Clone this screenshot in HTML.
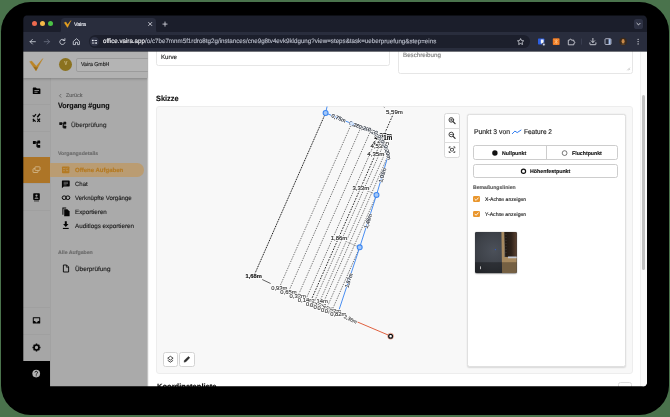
<!DOCTYPE html>
<html>
<head>
<meta charset="utf-8">
<title>Vaira</title>
<style>
html,body{margin:0;padding:0;width:670px;height:417px;overflow:hidden;background:#4a734c;font-family:"Liberation Sans",sans-serif;}
*{box-sizing:border-box}
.a{position:absolute}
#shadow{position:absolute;left:1px;top:2px;width:668px;height:413px;border-radius:29.5px;background:#000}
#win{position:absolute;left:0;top:0;width:670px;height:417px;clip-path:inset(15px 23px 30px 23px round 5px);background:#000}
#page{position:absolute;left:0;top:0;width:670px;height:417px;clip-path:inset(51px 0 0 0)}
#gs{position:absolute;left:0;top:0;width:670px;height:417px;will-change:transform}
#tabstrip{left:23px;top:15px;width:624px;height:17.5px;background:#1b1e2b}
#toolbar{left:23px;top:32px;width:624px;height:19px;background:#292d3d}
#tbline{left:23px;top:51px;width:624px;height:1px;background:rgba(24,26,37,.6)}
#tab{left:61px;top:17.6px;width:95px;height:15px;background:#292d3d;border-radius:3.5px 3.5px 0 0}
.tl{width:5.3px;height:5.3px;border-radius:50%;top:21.15px}
#omni{left:88.5px;top:35.3px;width:441.7px;height:12.8px;border-radius:6.4px;background:#1c1f2c}
.t{position:absolute;white-space:nowrap;line-height:1;transform-origin:0 0}
svg{position:absolute;left:0;top:0;overflow:visible}
#rail{left:23px;top:51px;width:26.5px;height:336px;background:#a6a6a6}
#side{left:49.5px;top:51px;width:98.2px;height:336px;background:#aaaaaa;border-left:0.6px solid #a2a2a2}
#sidehead{left:23px;top:51px;width:124.7px;height:26.5px;background:#b1b1b1;box-shadow:0 .5px 2.500px rgba(0,0,0,.22)}
.box{position:absolute;background:#fff;border:0.7px solid #e6e6e6;border-radius:2.5px}
#sketch{left:156.3px;top:106.3px;width:476.5px;height:267.6px;background:#f8f8f8;border:0.6px solid #ededed;border-radius:3px}
#card{left:466.5px;top:113.5px;width:159px;height:253px;background:#fff;border:0.6px solid #e0e0e0;border-radius:2.5px;box-shadow:0 0.8px 1.5px rgba(0,0,0,.13)}
.btn{position:absolute;background:#fff;border:0.7px solid #cdcdcd;border-radius:2.5px}
</style>
</head>
<body>
<div id="shadow"></div>
<div id="win"><div id="gs">
<div id="page"><div class="a" style="left:22px;top:50px;width:626px;height:340px;background:#fff"></div>
<div class="a" style="left:0;top:0;width:670px;height:417px;clip-path:inset(0 522.300px 0 0)">
<div id="rail" class="a"></div><div id="side" class="a"></div><div id="sidehead" class="a"></div>
<div class="a" style="left:23px;top:104.3px;width:26.5px;height:.6px;background:#a0a0a0"></div>
<div class="a" style="left:23px;top:131px;width:26.5px;height:.6px;background:#a0a0a0"></div>
<div class="a" style="left:23px;top:157.1px;width:26.5px;height:.6px;background:#a0a0a0"></div>
<div class="a" style="left:23px;top:183.2px;width:26.5px;height:.6px;background:#a0a0a0"></div>
<div class="a" style="left:23px;top:209.5px;width:26.5px;height:.6px;background:#a0a0a0"></div>
<div class="a" style="left:23px;top:307px;width:26.5px;height:.6px;background:#a0a0a0"></div>
<div class="a" style="left:23px;top:334px;width:26.5px;height:.6px;background:#a0a0a0"></div>
<div class="a" style="left:23px;top:361px;width:26.5px;height:.6px;background:#a0a0a0"></div>
<div class="a" style="left:23px;top:157.1px;width:26.5px;height:26px;background:#ad7527"></div>
<div class="a" style="left:23px;top:361px;width:26.5px;height:26px;background:#000"></div>
<div class="a" style="left:76.3px;top:57.6px;width:80px;height:14px;background:#b4b4b4;border:.6px solid #9c9c9c;border-radius:2px"></div>
<div class="a" style="left:59.1px;top:57.9px;width:13.2px;height:13.2px;border-radius:50%;background:#8b721f"></div>
<span class="t" style="left:64.30px;top:62.31px;font-size:4.6px;color:#c2b078;font-weight:bold;-webkit-text-stroke:0.14px #c2b078;">V</span>
<span class="t" style="left:80.90px;top:61.67px;font-size:5.7px;color:#232323;transform:scaleX(0.9180) rotate(0.03deg);-webkit-text-stroke:0.14px #232323;">Vaira GmbH</span>
<div class="a" style="left:50px;top:163.2px;width:94.4px;height:13.4px;border-radius:0 6.7px 6.7px 0;background:#ba9c72"></div>
<span class="t" style="left:66.30px;top:93.44px;font-size:5.5px;color:#5e5e5e;transform:scaleX(0.9816) rotate(0.03deg);-webkit-text-stroke:0.14px #5e5e5e;">Zurück</span>
<span class="t" style="left:58.00px;top:101.55px;font-size:7.5px;color:#101010;font-weight:bold;transform:scaleX(0.9478) rotate(0.03deg);-webkit-text-stroke:0.14px #101010;">Vorgang #gung</span>
<span class="t" style="left:70.80px;top:121.85px;font-size:6.2px;color:#2b2b2b;transform:scaleX(1.0300) rotate(0.03deg);-webkit-text-stroke:0.14px #2b2b2b;">Überprüfung</span>
<span class="t" style="left:58.00px;top:151.07px;font-size:5.0px;color:#6c6c6c;font-weight:bold;transform:scaleX(1.0434) rotate(0.03deg);-webkit-text-stroke:0.14px #6c6c6c;">Vorgangsdetails</span>
<span class="t" style="left:75.10px;top:166.82px;font-size:6.0px;color:#b47a22;font-weight:bold;transform:scaleX(1.0018) rotate(0.03deg);-webkit-text-stroke:0.14px #b47a22;">Offene Aufgaben</span>
<span class="t" style="left:75.10px;top:180.65px;font-size:6.2px;color:#1f1f1f;transform:scaleX(0.9697) rotate(0.03deg);-webkit-text-stroke:0.14px #1f1f1f;">Chat</span>
<span class="t" style="left:75.10px;top:194.55px;font-size:6.2px;color:#1f1f1f;transform:scaleX(0.9807) rotate(0.03deg);-webkit-text-stroke:0.14px #1f1f1f;">Verknüpfte Vorgänge</span>
<span class="t" style="left:75.10px;top:208.55px;font-size:6.2px;color:#1f1f1f;transform:scaleX(1.0061) rotate(0.03deg);-webkit-text-stroke:0.14px #1f1f1f;">Exportieren</span>
<span class="t" style="left:75.10px;top:222.95px;font-size:6.2px;color:#1f1f1f;transform:scaleX(1.0146) rotate(0.03deg);-webkit-text-stroke:0.14px #1f1f1f;">Auditlogs exportieren</span>
<span class="t" style="left:58.00px;top:249.97px;font-size:5.0px;color:#6c6c6c;font-weight:bold;transform:scaleX(1.0410) rotate(0.03deg);-webkit-text-stroke:0.14px #6c6c6c;">Alle Aufgaben</span>
<span class="t" style="left:75.10px;top:265.95px;font-size:6.2px;color:#1f1f1f;transform:scaleX(1.0300) rotate(0.03deg);-webkit-text-stroke:0.14px #1f1f1f;">Überprüfung</span>
<svg width="670" height="417" viewBox="0 0 670 417">
<path d="M29.7 61.7 L31.7 61.1 L36.3 66.3 L42.8 58.6 L36.0 70.8 Z" fill="#bb8426" stroke="#bb8426" stroke-width=".5" stroke-linejoin="round"/>
<path d="M33.4 66.4 L36.0 70.8 L38.0 67.3 L36.3 67.6 Z" fill="#96691a"/>
<path d="M61.2 94.0l-1.7 1.8 1.7 1.8" fill="none" stroke="#5a5a5a" stroke-width=".75"/>
<path d="M33.4 87.6h2.4l1 1h3a.6.6 0 0 1 .6.6v4.2a.6.6 0 0 1-.6.6h-6.4a.6.6 0 0 1-.6-.6v-5.200a.6.6 0 0 1 .6-.6z" fill="#050505"/><rect x="34.4" y="90.2" width="4.6" height=".8" fill="#a6a6a6"/><rect x="34.400" y="91.800" width="3.200" height=".8" fill="#a6a6a6"/>
<g fill="none" stroke="#050505" stroke-width="1.150" stroke-linejoin="round"><path d="M32.700 115.300l1.300 1.300 2-2.500"/><path d="M40 113.700l-2.700 3.500" stroke-width="1.400"/><path d="M37.300 118.600l2.700 3.200M40 118.600l-2.700 3.200"/></g><path d="M33.300 118.400l2.800 2.800-.9.900-1-1-.9.900-.9-.9.900-.9-.9-.9z" fill="#050505"/>
<g transform="translate(36.5 144) scale(1.0)" fill="#050505"><rect x="-3.6" y="-3" width="2.9" height="2.9" rx=".3"/><rect x="0.800" y="-3.4" width="2.900" height="2.900" rx=".3"/><rect x="0.800" y=".9" width="2.900" height="2.900" rx=".3"/><path d="M-1 -1.9h1.200v4.600h1v-.9h-.2v-2.800h.2v-.9z" stroke="#050505" stroke-width=".5"/></g>
<g transform="translate(62.7 125) scale(0.95)" fill="#111"><rect x="-3.6" y="-3" width="2.9" height="2.9" rx=".3"/><rect x="0.800" y="-3.4" width="2.900" height="2.900" rx=".3"/><rect x="0.800" y=".9" width="2.900" height="2.900" rx=".3"/><path d="M-1 -1.9h1.200v4.600h1v-.9h-.2v-2.800h.2v-.9z" stroke="#111" stroke-width=".5"/></g>
<g fill="none" stroke="#d9c39b" stroke-width=".75"><rect x="35" y="166.800" width="5" height="3.600" rx=".6"/><path d="M35 168.700h-1.400a.6.6 0 0 0-.6.600v2.600a.6.6 0 0 0 .6.600h3.800a.6.6 0 0 0 .6-.6v-1.300"/></g>
<rect x="33.200" y="193.200" width="6.600" height="6.800" rx=".8" fill="#050505"/><circle cx="36.500" cy="195.600" r="1.100" fill="#a6a6a6"/><path d="M34.500 198.800a2 1.400 0 0 1 4 0z" fill="#a6a6a6"/><rect x="34" y="200.600" width="5" height=".7" fill="#050505"/>
<path d="M33.300 317.200h6.400a.5.500 0 0 1 .5.500v5.400a.5.500 0 0 1-.5.500h-6.400a.5.500 0 0 1-.5-.5v-5.400a.5.500 0 0 1 .5-.5z" fill="#050505"/><path d="M33.800 318.200h5.400v2.900h-1.400a1.300 1.300 0 0 1-2.600 0h-1.400z" fill="#a6a6a6"/>
<g transform="translate(36.5 347.500)"><circle r="2.500" fill="none" stroke="#050505" stroke-width="1.700"/><g stroke="#050505" stroke-width="1.500"><path d="M0 -2.600V-4" transform="rotate(0)"/><path d="M0 -2.600V-4" transform="rotate(45)"/><path d="M0 -2.600V-4" transform="rotate(90)"/><path d="M0 -2.600V-4" transform="rotate(135)"/><path d="M0 -2.600V-4" transform="rotate(180)"/><path d="M0 -2.600V-4" transform="rotate(225)"/><path d="M0 -2.600V-4" transform="rotate(270)"/><path d="M0 -2.600V-4" transform="rotate(315)"/></g></g>
<circle cx="36.200" cy="373.600" r="3.850" fill="#b3b3b3"/><path d="M34.950 372.550a1.300 1.300 0 1 1 1.950 1.100c-.5.300-.7.500-.7 1.050" fill="none" stroke="#0c0c0c" stroke-width=".85"/><circle cx="36.200" cy="375.850" r=".52" fill="#0c0c0c"/>
<rect x="62" y="166.400" width="7.400" height="6.800" rx=".8" fill="#b47a22"/><g stroke="#ba9c72" stroke-width=".7" fill="none"><path d="M63.200 168.500h1.600M63.200 170.700h1.600M65.600 168.500l.7.700 1.400-1.500"/><path d="M66 170.700h2.200"/></g>
<path d="M62.500 180.600h6.600a.6.600 0 0 1 .6.600v4.600a.6.600 0 0 1-.6.600h-5.400l-1.800 1.800v-7a.6.600 0 0 1 .6-.6z" fill="#050505"/><path d="M63.600 182.300h4.400M63.600 183.600h4.400M63.600 184.900h3" stroke="#ababab" stroke-width=".5"/>
<g fill="none" stroke="#050505" stroke-width="1"><rect x="62.200" y="195.900" width="4" height="3.600" rx="1.800"/><rect x="65.800" y="195.900" width="4" height="3.600" rx="1.800"/></g>
<path d="M62.400 207.500h3.800v1h-2.800v6.200h-1z" fill="#050505"/><path d="M64.200 209.300h3.200l2.200 2.200v4.300a.5.500 0 0 1-.5.500h-4.900z" fill="#050505"/>
<path d="M64.800 221.300h2v2.700h1.700l-2.700 2.900-2.700-2.900h1.700z" fill="#050505"/><rect x="62.900" y="227.900" width="5.800" height="1.100" fill="#050505"/>
<path d="M63.400 265h3.200l2 2v5h-5.200z" fill="none" stroke="#050505" stroke-width=".9" stroke-linejoin="round"/><path d="M66.400 265v2.200h2.200" fill="none" stroke="#050505" stroke-width=".7"/>
</svg>
</div><!-- /sidebar clip -->
<div class="a" id="sideshadow" style="left:147.700px;top:51.500px;width:1.500px;height:335px;background:linear-gradient(90deg,rgba(0,0,0,.10),rgba(0,0,0,0))"></div>
<div class="box" style="left:156.3px;top:40px;width:233.600px;height:26.200px"></div>
<div class="box" style="left:398px;top:40px;width:235px;height:33.700px"></div>
<span class="t" style="left:161.20px;top:53.84px;font-size:6.1px;color:#222;transform:scaleX(1.0040) rotate(0.03deg);-webkit-text-stroke:0.14px #222;">Kurve</span>
<span class="t" style="left:403.40px;top:51.75px;font-size:6.2px;color:#7e7e7e;transform:scaleX(1.0022) rotate(0.03deg);-webkit-text-stroke:0.14px #7e7e7e;">Beschreibung</span>
<span class="t" style="left:156.40px;top:94.68px;font-size:7.7px;color:#111;font-weight:bold;transform:scaleX(0.9643) rotate(0.03deg);-webkit-text-stroke:0.14px #111;">Skizze</span>
<span class="t" style="left:156.60px;top:382.68px;font-size:7.7px;color:#111;font-weight:bold;transform:scaleX(0.9810) rotate(0.03deg);-webkit-text-stroke:0.14px #111;">Koordinatenliste</span>
<svg width="670" height="417" viewBox="0 0 670 417"><path d="M627.300 70.300l2.600-2.600M628.800 70.300l1.100-1.100" stroke="#8f8f8f" stroke-width=".5"/></svg>
<div class="a" style="left:640.300px;top:51.500px;width:6.700px;height:335px;background:#fafafa;border-left:.5px solid #f0f0f0"></div>
<div class="a" style="left:641.900px;top:94.500px;width:3.600px;height:175.500px;border-radius:1.800px;background:#c1c1c1"></div>
<div class="btn" style="left:617.500px;top:382.300px;width:14.500px;height:12px;border-color:#dcdcdc"></div>
<div id="sketch" class="a"></div>
<svg width="670" height="417" viewBox="0 0 670 417" font-family="Liberation Sans, sans-serif">
<defs><clipPath id="skc"><rect x="156.600" y="106.600" width="476" height="266.400" rx="3"/></clipPath></defs>
<g clip-path="url(#skc)">
<path d="M325.6 113.0L253.1 277.7" stroke="#0c0c0c" stroke-width="1.0" stroke-dasharray="1.1 0.8" fill="none"/>
<path d="M351.6 123.5L278.9 288.6" stroke="#121212" stroke-width="0.58" stroke-dasharray="1.35 1.15" fill="none"/>
<path d="M361.0 127.2L288.2 292.6" stroke="#121212" stroke-width="0.58" stroke-dasharray="1.35 1.15" fill="none"/>
<path d="M370.8 130.4L297.7 296.6" stroke="#121212" stroke-width="0.58" stroke-dasharray="1.35 1.15" fill="none"/>
<path d="M378.0 135.4L305.6 300.0" stroke="#121212" stroke-width="0.58" stroke-dasharray="1.35 1.15" fill="none"/>
<path d="M383.8 143.8L313.6 303.4" stroke="#121212" stroke-width="0.58" stroke-dasharray="1.35 1.15" fill="none"/>
<path d="M386.6 149.5L318.1 305.3" stroke="#121212" stroke-width="0.58" stroke-dasharray="1.35 1.15" fill="none"/>
<path d="M388.2 155.4L321.6 306.8" stroke="#121212" stroke-width="0.58" stroke-dasharray="1.35 1.15" fill="none"/>
<path d="M376.5 194.9L326.4 308.8" stroke="#121212" stroke-width="0.58" stroke-dasharray="1.35 1.15" fill="none"/>
<path d="M359.7 247.3L331.7 311.0" stroke="#121212" stroke-width="0.58" stroke-dasharray="1.35 1.15" fill="none"/>
<path d="M393.6 113.2L310.3 302.0" stroke="#0c0c0c" stroke-width="0.9" stroke-dasharray="1.6 1.3" fill="none"/>
<path d="M383.700 106.900l.9.700" stroke="#222" stroke-width=".6"/>
<path d="M262.200 279.500L270.600 283.500" stroke="#222" stroke-width=".7"/>
<path d="M357.500 322L389.300 335.500" stroke="#de5836" stroke-width=".95"/>
<text x="386" y="113.9" font-size="6.0" textLength="16.8" lengthAdjust="spacingAndGlyphs" text-anchor="start" fill="#fff" stroke="#fff" stroke-width="1.400" stroke-linejoin="round">5,59m</text>
<text x="386" y="113.9" font-size="6.0" textLength="16.8" lengthAdjust="spacingAndGlyphs" text-anchor="start" fill="#262626" stroke="#262626" stroke-width=".15">5,59m</text>
<text x="374.4" y="138.1" font-size="6.4" font-weight="bold" textLength="17.8" lengthAdjust="spacingAndGlyphs" text-anchor="start" fill="#fff" stroke="#fff" stroke-width="1.400" stroke-linejoin="round">4,97m</text>
<text x="374.4" y="138.1" font-size="6.4" font-weight="bold" textLength="17.8" lengthAdjust="spacingAndGlyphs" text-anchor="start" fill="#0a0a0a" stroke="#0a0a0a" stroke-width=".15">4,97m</text>
<text x="374.6" y="139.6" font-size="6.4" font-weight="bold" textLength="17.8" lengthAdjust="spacingAndGlyphs" text-anchor="start" fill="#fff" stroke="#fff" stroke-width="1.400" stroke-linejoin="round">4,81m</text>
<text x="374.6" y="139.6" font-size="6.4" font-weight="bold" textLength="17.8" lengthAdjust="spacingAndGlyphs" text-anchor="start" fill="#0a0a0a" stroke="#0a0a0a" stroke-width=".15">4,81m</text>
<text x="372.4" y="144.6" font-size="6.0" textLength="16.6" lengthAdjust="spacingAndGlyphs" text-anchor="start" fill="#fff" stroke="#fff" stroke-width="1.400" stroke-linejoin="round">4,68m</text>
<text x="372.4" y="144.6" font-size="6.0" textLength="16.6" lengthAdjust="spacingAndGlyphs" text-anchor="start" fill="#262626" stroke="#262626" stroke-width=".15">4,68m</text>
<text x="370.6" y="148.4" font-size="6.0" textLength="16.6" lengthAdjust="spacingAndGlyphs" text-anchor="start" fill="#fff" stroke="#fff" stroke-width="1.400" stroke-linejoin="round">4,53m</text>
<text x="370.6" y="148.4" font-size="6.0" textLength="16.6" lengthAdjust="spacingAndGlyphs" text-anchor="start" fill="#262626" stroke="#262626" stroke-width=".15">4,53m</text>
<text x="367.3" y="155.6" font-size="6.0" textLength="17.0" lengthAdjust="spacingAndGlyphs" text-anchor="start" fill="#fff" stroke="#fff" stroke-width="1.400" stroke-linejoin="round">4,35m</text>
<text x="367.3" y="155.6" font-size="6.0" textLength="17.0" lengthAdjust="spacingAndGlyphs" text-anchor="start" fill="#262626" stroke="#262626" stroke-width=".15">4,35m</text>
<text x="352.5" y="190.2" font-size="6.0" textLength="16.7" lengthAdjust="spacingAndGlyphs" text-anchor="start" fill="#fff" stroke="#fff" stroke-width="1.400" stroke-linejoin="round">3,33m</text>
<text x="352.5" y="190.2" font-size="6.0" textLength="16.7" lengthAdjust="spacingAndGlyphs" text-anchor="start" fill="#262626" stroke="#262626" stroke-width=".15">3,33m</text>
<text x="330.7" y="239.8" font-size="6.0" textLength="16.5" lengthAdjust="spacingAndGlyphs" text-anchor="start" fill="#fff" stroke="#fff" stroke-width="1.400" stroke-linejoin="round">1,86m</text>
<text x="330.7" y="239.8" font-size="6.0" textLength="16.5" lengthAdjust="spacingAndGlyphs" text-anchor="start" fill="#262626" stroke="#262626" stroke-width=".15">1,86m</text>
<path d="M327.3 105.5 L325.6 113.0 L351.6 123.5 L361.0 127.2 L370.8 130.4 L378.0 135.4 L381.0 139.2 L383.8 143.8 L386.6 149.5 L388.2 155.4 L376.5 194.9 L359.7 247.3 L337.8 313.6" fill="none" stroke="#3f88f0" stroke-width=".95" stroke-linejoin="round"/>
<path d="M369.200 191.500L373.500 193.600M347.400 242.200L357 246.200" stroke="#444" stroke-width=".35"/>
<text x="338.6" y="118.2" transform="rotate(22.0 338.6 118.2)" dy="1.800" text-anchor="middle" font-size="5.3" fill="#fff" stroke="#fff" stroke-width="1.300" stroke-linejoin="round">0,75m</text>
<text x="338.6" y="118.2" transform="rotate(22.0 338.6 118.2)" dy="1.800" text-anchor="middle" font-size="5.3" fill="#2f3642" stroke="#2f3642" stroke-width=".18">0,75m</text>
<text x="356.3" y="125.3" transform="rotate(21.5 356.3 125.3)" dy="1.800" text-anchor="middle" font-size="5.3" fill="#fff" stroke="#fff" stroke-width="1.300" stroke-linejoin="round">0,28m</text>
<text x="356.3" y="125.3" transform="rotate(21.5 356.3 125.3)" dy="1.800" text-anchor="middle" font-size="5.3" fill="#2f3642" stroke="#2f3642" stroke-width=".18">0,28m</text>
<text x="365.9" y="128.8" transform="rotate(18.1 365.9 128.8)" dy="1.800" text-anchor="middle" font-size="5.3" fill="#fff" stroke="#fff" stroke-width="1.300" stroke-linejoin="round">0,28m</text>
<text x="365.9" y="128.8" transform="rotate(18.1 365.9 128.8)" dy="1.800" text-anchor="middle" font-size="5.3" fill="#2f3642" stroke="#2f3642" stroke-width=".18">0,28m</text>
<text x="374.4" y="132.9" transform="rotate(34.8 374.4 132.9)" dy="1.800" text-anchor="middle" font-size="5.3" fill="#fff" stroke="#fff" stroke-width="1.300" stroke-linejoin="round">0,23m</text>
<text x="374.4" y="132.9" transform="rotate(34.8 374.4 132.9)" dy="1.800" text-anchor="middle" font-size="5.3" fill="#2f3642" stroke="#2f3642" stroke-width=".18">0,23m</text>
<text x="379.5" y="137.3" transform="rotate(51.7 379.5 137.3)" dy="1.800" text-anchor="middle" font-size="5.3" fill="#fff" stroke="#fff" stroke-width="1.300" stroke-linejoin="round">0,16m</text>
<text x="379.5" y="137.3" transform="rotate(51.7 379.5 137.3)" dy="1.800" text-anchor="middle" font-size="5.3" fill="#2f3642" stroke="#2f3642" stroke-width=".18">0,16m</text>
<text x="382.4" y="141.5" transform="rotate(58.7 382.4 141.5)" dy="1.800" text-anchor="middle" font-size="5.3" fill="#fff" stroke="#fff" stroke-width="1.300" stroke-linejoin="round">0,16m</text>
<text x="382.4" y="141.5" transform="rotate(58.7 382.4 141.5)" dy="1.800" text-anchor="middle" font-size="5.3" fill="#2f3642" stroke="#2f3642" stroke-width=".18">0,16m</text>
<text x="385.2" y="146.7" transform="rotate(63.8 385.2 146.7)" dy="1.800" text-anchor="middle" font-size="5.3" fill="#fff" stroke="#fff" stroke-width="1.300" stroke-linejoin="round">0,18m</text>
<text x="385.2" y="146.7" transform="rotate(63.8 385.2 146.7)" dy="1.800" text-anchor="middle" font-size="5.3" fill="#2f3642" stroke="#2f3642" stroke-width=".18">0,18m</text>
<text x="387.4" y="152.4" transform="rotate(74.8 387.4 152.4)" dy="1.800" text-anchor="middle" font-size="5.3" fill="#fff" stroke="#fff" stroke-width="1.300" stroke-linejoin="round">0,20m</text>
<text x="387.4" y="152.4" transform="rotate(74.8 387.4 152.4)" dy="1.800" text-anchor="middle" font-size="5.3" fill="#2f3642" stroke="#2f3642" stroke-width=".18">0,20m</text>
<text x="382.4" y="175.2" transform="rotate(-73.5 382.4 175.2)" dy="1.800" text-anchor="middle" font-size="5.3" fill="#fff" stroke="#fff" stroke-width="1.300" stroke-linejoin="round">1,03m</text>
<text x="382.4" y="175.2" transform="rotate(-73.5 382.4 175.2)" dy="1.800" text-anchor="middle" font-size="5.3" fill="#2f3642" stroke="#2f3642" stroke-width=".18">1,03m</text>
<text x="368.1" y="221.1" transform="rotate(-72.2 368.1 221.1)" dy="1.800" text-anchor="middle" font-size="5.3" fill="#fff" stroke="#fff" stroke-width="1.300" stroke-linejoin="round">1,48m</text>
<text x="368.1" y="221.1" transform="rotate(-72.2 368.1 221.1)" dy="1.800" text-anchor="middle" font-size="5.3" fill="#2f3642" stroke="#2f3642" stroke-width=".18">1,48m</text>
<text x="348.8" y="280.5" transform="rotate(-71.7 348.8 280.5)" dy="1.800" text-anchor="middle" font-size="5.3" fill="#fff" stroke="#fff" stroke-width="1.300" stroke-linejoin="round">1,87m</text>
<text x="348.8" y="280.5" transform="rotate(-71.7 348.8 280.5)" dy="1.800" text-anchor="middle" font-size="5.3" fill="#2f3642" stroke="#2f3642" stroke-width=".18">1,87m</text>
<circle cx="325.6" cy="113.0" r="2.450" fill="#a3c7f8" stroke="#3f88f0" stroke-width="1.100"/>
<circle cx="376.5" cy="194.9" r="2.450" fill="#a3c7f8" stroke="#3f88f0" stroke-width="1.100"/>
<circle cx="359.7" cy="247.3" r="2.450" fill="#a3c7f8" stroke="#3f88f0" stroke-width="1.100"/>
<circle cx="351.6" cy="123.5" r="1.800" fill="#dbe8fb" stroke="#a9c8f5" stroke-width=".5"/>
<text x="245.6" y="278.1" font-size="6.0" font-weight="bold" textLength="16.2" lengthAdjust="spacingAndGlyphs" text-anchor="start" fill="#fff" stroke="#fff" stroke-width="1.400" stroke-linejoin="round">1,68m</text>
<text x="245.6" y="278.1" font-size="6.0" font-weight="bold" textLength="16.2" lengthAdjust="spacingAndGlyphs" text-anchor="start" fill="#111" stroke="#111" stroke-width=".15">1,68m</text>
<text x="271.2" y="289.5" font-size="6.0" textLength="16.3" lengthAdjust="spacingAndGlyphs" text-anchor="start" fill="#fff" stroke="#fff" stroke-width="1.400" stroke-linejoin="round">0,93m</text>
<text x="271.2" y="289.5" font-size="6.0" textLength="16.3" lengthAdjust="spacingAndGlyphs" text-anchor="start" fill="#3c3c3c" stroke="#3c3c3c" stroke-width=".15">0,93m</text>
<text x="280.3" y="294.0" font-size="6.0" textLength="16.3" lengthAdjust="spacingAndGlyphs" text-anchor="start" fill="#fff" stroke="#fff" stroke-width="1.400" stroke-linejoin="round">0,65m</text>
<text x="280.3" y="294.0" font-size="6.0" textLength="16.3" lengthAdjust="spacingAndGlyphs" text-anchor="start" fill="#3c3c3c" stroke="#3c3c3c" stroke-width=".15">0,65m</text>
<text x="289.5" y="298.0" font-size="6.0" textLength="16.3" lengthAdjust="spacingAndGlyphs" text-anchor="start" fill="#fff" stroke="#fff" stroke-width="1.400" stroke-linejoin="round">0,32m</text>
<text x="289.5" y="298.0" font-size="6.0" textLength="16.3" lengthAdjust="spacingAndGlyphs" text-anchor="start" fill="#3c3c3c" stroke="#3c3c3c" stroke-width=".15">0,32m</text>
<text x="297.8" y="301.6" font-size="6.0" textLength="16.3" lengthAdjust="spacingAndGlyphs" text-anchor="start" fill="#fff" stroke="#fff" stroke-width="1.400" stroke-linejoin="round">0,14m</text>
<text x="297.8" y="301.6" font-size="6.0" textLength="16.3" lengthAdjust="spacingAndGlyphs" text-anchor="start" fill="#3c3c3c" stroke="#3c3c3c" stroke-width=".15">0,14m</text>
<text x="305.9" y="305.7" font-size="6.0" textLength="16.3" lengthAdjust="spacingAndGlyphs" text-anchor="start" fill="#fff" stroke="#fff" stroke-width="1.400" stroke-linejoin="round">0,08m</text>
<text x="305.9" y="305.7" font-size="6.0" textLength="16.3" lengthAdjust="spacingAndGlyphs" text-anchor="start" fill="#3c3c3c" stroke="#3c3c3c" stroke-width=".15">0,08m</text>
<text x="311.5" y="303.2" font-size="6.0" textLength="16.3" lengthAdjust="spacingAndGlyphs" text-anchor="start" fill="#fff" stroke="#fff" stroke-width="1.400" stroke-linejoin="round">2,14m</text>
<text x="311.5" y="303.2" font-size="6.0" textLength="16.3" lengthAdjust="spacingAndGlyphs" text-anchor="start" fill="#3c3c3c" stroke="#3c3c3c" stroke-width=".15">2,14m</text>
<text x="310.0" y="307.0" font-size="6.0" textLength="16.3" lengthAdjust="spacingAndGlyphs" text-anchor="start" fill="#fff" stroke="#fff" stroke-width="1.400" stroke-linejoin="round">0,10m</text>
<text x="310.0" y="307.0" font-size="6.0" textLength="16.3" lengthAdjust="spacingAndGlyphs" text-anchor="start" fill="#3c3c3c" stroke="#3c3c3c" stroke-width=".15">0,10m</text>
<text x="313.5" y="308.6" font-size="6.0" textLength="16.3" lengthAdjust="spacingAndGlyphs" text-anchor="start" fill="#fff" stroke="#fff" stroke-width="1.400" stroke-linejoin="round">0,11m</text>
<text x="313.5" y="308.6" font-size="6.0" textLength="16.3" lengthAdjust="spacingAndGlyphs" text-anchor="start" fill="#3c3c3c" stroke="#3c3c3c" stroke-width=".15">0,11m</text>
<text x="317.5" y="310.4" font-size="6.0" textLength="16.3" lengthAdjust="spacingAndGlyphs" text-anchor="start" fill="#fff" stroke="#fff" stroke-width="1.400" stroke-linejoin="round">0,14m</text>
<text x="317.5" y="310.4" font-size="6.0" textLength="16.3" lengthAdjust="spacingAndGlyphs" text-anchor="start" fill="#3c3c3c" stroke="#3c3c3c" stroke-width=".15">0,14m</text>
<text x="321.0" y="311.6" font-size="6.0" textLength="16.3" lengthAdjust="spacingAndGlyphs" text-anchor="start" fill="#fff" stroke="#fff" stroke-width="1.400" stroke-linejoin="round">0,18m</text>
<text x="321.0" y="311.6" font-size="6.0" textLength="16.3" lengthAdjust="spacingAndGlyphs" text-anchor="start" fill="#3c3c3c" stroke="#3c3c3c" stroke-width=".15">0,18m</text>
<text x="324.8" y="313.2" font-size="6.0" textLength="16.3" lengthAdjust="spacingAndGlyphs" text-anchor="start" fill="#fff" stroke="#fff" stroke-width="1.400" stroke-linejoin="round">0,22m</text>
<text x="324.8" y="313.2" font-size="6.0" textLength="16.3" lengthAdjust="spacingAndGlyphs" text-anchor="start" fill="#3c3c3c" stroke="#3c3c3c" stroke-width=".15">0,22m</text>
<text x="330.2" y="315.6" font-size="6.0" textLength="16.3" lengthAdjust="spacingAndGlyphs" text-anchor="start" fill="#fff" stroke="#fff" stroke-width="1.400" stroke-linejoin="round">0,82m</text>
<text x="330.2" y="315.6" font-size="6.0" textLength="16.3" lengthAdjust="spacingAndGlyphs" text-anchor="start" fill="#3c3c3c" stroke="#3c3c3c" stroke-width=".15">0,82m</text>
<text x="350.6" y="319.2" transform="rotate(25.7 350.6 319.2)" dy="1.800" text-anchor="middle" font-size="5.0" fill="#fff" stroke="#fff" stroke-width="1.300" stroke-linejoin="round">2,36m</text>
<text x="350.6" y="319.2" transform="rotate(25.7 350.6 319.2)" dy="1.800" text-anchor="middle" font-size="5.0" fill="#555" stroke="#555" stroke-width=".18">2,36m</text>
<circle cx="390.600" cy="336.200" r="3" fill="#fff" stroke="#e3694a" stroke-width=".55"/><circle cx="390.600" cy="336.200" r="1.900" fill="#fff" stroke="#111" stroke-width="1.300"/>
</g></svg>
<div class="btn" style="left:444.400px;top:113.200px;width:15.300px;height:44.400px;border-color:#d9d9d9"></div>
<div class="a" style="left:444.400px;top:128px;width:15.300px;height:.6px;background:#dcdcdc"></div>
<div class="a" style="left:444.400px;top:142.300px;width:15.300px;height:.6px;background:#dcdcdc"></div>
<div class="btn" style="left:163px;top:351.500px;width:14.700px;height:15.100px;border-color:#d4d4d4"></div>
<div class="btn" style="left:179.400px;top:351.500px;width:15.300px;height:15.100px;border-color:#d4d4d4"></div>
<div id="card" class="a"></div>
<div class="btn" style="left:473.200px;top:145.300px;width:145.200px;height:14.800px"></div>
<div class="a" style="left:546px;top:145.300px;width:.7px;height:14.800px;background:#cdcdcd"></div>
<div class="btn" style="left:473.200px;top:163.900px;width:145.200px;height:14.600px"></div>
<span class="t" style="left:473.50px;top:128.56px;font-size:6.9px;color:#222;transform:scaleX(0.9879) rotate(0.03deg);-webkit-text-stroke:0.14px #222;">Punkt 3 von</span>
<span class="t" style="left:524.00px;top:128.56px;font-size:6.9px;color:#222;transform:scaleX(0.9480) rotate(0.03deg);-webkit-text-stroke:0.14px #222;">Feature 2</span>
<span class="t" style="left:502.00px;top:150.93px;font-size:5.4px;color:#161616;font-weight:bold;transform:scaleX(0.9720) rotate(0.03deg);-webkit-text-stroke:0.14px #161616;">Nullpunkt</span>
<span class="t" style="left:571.60px;top:150.93px;font-size:5.4px;color:#161616;font-weight:bold;transform:scaleX(0.9678) rotate(0.03deg);-webkit-text-stroke:0.14px #161616;">Fluchtpunkt</span>
<span class="t" style="left:530.20px;top:169.33px;font-size:5.4px;color:#161616;font-weight:bold;transform:scaleX(0.9830) rotate(0.03deg);-webkit-text-stroke:0.14px #161616;">Höhenfestpunkt</span>
<span class="t" style="left:473.20px;top:184.50px;font-size:5.2px;color:#5a5a5a;font-weight:bold;transform:scaleX(0.9875) rotate(0.03deg);-webkit-text-stroke:0.14px #5a5a5a;">Bemaßungslinien</span>
<span class="t" style="left:484.90px;top:196.70px;font-size:5.2px;color:#262626;transform:scaleX(0.9785) rotate(0.03deg);-webkit-text-stroke:0.14px #262626;">X-Achse anzeigen</span>
<span class="t" style="left:484.90px;top:211.50px;font-size:5.2px;color:#262626;transform:scaleX(0.9897) rotate(0.03deg);-webkit-text-stroke:0.14px #262626;">Y-Achse anzeigen</span>
<div class="a" style="left:473.200px;top:195.85px;width:6.700px;height:6.500px;border-radius:1.300px;background:#e9962d"></div>
<div class="a" style="left:473.200px;top:210.75px;width:6.700px;height:6.500px;border-radius:1.300px;background:#e9962d"></div>
<svg width="670" height="417" viewBox="0 0 670 417">
<path d="M474.900 199.20l1.200 1.200 2.200-2.500" fill="none" stroke="#fff" stroke-width=".9" stroke-linecap="round" stroke-linejoin="round"/>
<path d="M474.900 214.10l1.200 1.200 2.200-2.500" fill="none" stroke="#fff" stroke-width=".9" stroke-linecap="round" stroke-linejoin="round"/>
<path d="M512.300 133.700l2.600-2.600 2.300 1.500 3.800-2.500" fill="none" stroke="#2f7df2" stroke-width="1" stroke-linejoin="round" stroke-linecap="round"/>
<circle cx="494.900" cy="153" r="2.700" fill="#111"/>
<circle cx="564.600" cy="153.100" r="2.400" fill="#fff" stroke="#222" stroke-width=".6"/>
<circle cx="523.500" cy="171.300" r="2.100" fill="#fff" stroke="#111" stroke-width="1.200"/>
<g fill="none" stroke="#262626" stroke-width=".85" stroke-linecap="round"><circle cx="451.3" cy="119.89999999999999" r="2.300"/><path d="M453.1 121.69999999999999l2 2" stroke-width="1.150"/><path d="M450.2 119.89999999999999h2.200" stroke-width=".65"/><path d="M451.3 118.8v2.200" stroke-width=".65"/></g>
<g fill="none" stroke="#262626" stroke-width=".85" stroke-linecap="round"><circle cx="451.3" cy="134.5" r="2.300"/><path d="M453.1 136.29999999999998l2 2" stroke-width="1.150"/><path d="M450.2 134.5h2.200" stroke-width=".65"/></g>
<g fill="none" stroke="#2b2b2b" stroke-width=".8"><path d="M449.200 148.300v-1.400h1.400M453.400 146.900h1.400v1.400M454.800 151.100v1.400h-1.400M450.600 152.500h-1.400v-1.400"/><rect x="450.500" y="148.400" width="3" height="2.600" rx=".5"/></g>
<g fill="none" stroke="#262626" stroke-width=".85" stroke-linejoin="round"><path d="M170.400 356.300l2.700 1.900-2.700 1.900-2.700-1.900z"/><path d="M167.700 360.300l2.700 1.900 2.700-1.900"/></g>
<path d="M184 362.200l.5-1.900 3.900-3.900 1.400 1.400-3.900 3.900z" fill="#2b2b2b" stroke="#2b2b2b" stroke-width=".4" stroke-linejoin="round"/>
</svg>
<div class="a" style="left:475.100px;top:231.800px;width:41.700px;height:41px;border-radius:1.800px;overflow:hidden;background:#3b3f45;box-shadow:0 .6px 1.300px rgba(0,0,0,.4)"><svg width="41.700" height="41" viewBox="0 0 41.7 41" style="left:0;top:0"><defs><radialGradient id="asg" cx="45%" cy="45%" r="70%"><stop offset="0" stop-color="#4b5059"/><stop offset=".6" stop-color="#3d4148"/><stop offset="1" stop-color="#2d3036"/></radialGradient><linearGradient id="obj" x1="0" x2="1"><stop offset="0" stop-color="#1f1813"/><stop offset=".55" stop-color="#2e221a"/><stop offset="1" stop-color="#5b4231"/></linearGradient></defs><rect width="41.700" height="41" fill="url(#asg)"/><path d="M26.400 0h3.200v25h12.100v16h-14.600z" fill="#a88a60"/><path d="M29.400 0h12.300v24.800h-11.300z" fill="url(#obj)"/><path d="M33 24.600h8.700v1.700h-8.700z" fill="#c4c8d2"/><path d="M31 2v21" stroke="#6a6a6a" stroke-width=".5" stroke-dasharray=".8 2.200"/><rect y="30.200" width="41.700" height="10.800" fill="rgba(0,0,0,.30)"/><circle cx="20.400" cy="17.600" r=".6" fill="#2a5bd8"/><rect x="5.200" y="34.400" width=".8" height="2.800" fill="#e6e6e6"/></svg></div>
</div><!-- /page -->
<div id="tabstrip" class="a"></div><div id="toolbar" class="a"></div><div id="tbline" class="a"></div><div id="tab" class="a"></div>
<div class="a tl" style="left:31.5px;background:#ed6a4e"></div><div class="a tl" style="left:39.9px;background:#f5b947"></div><div class="a tl" style="left:48.1px;background:#4bc245"></div>
<div id="omni" class="a"></div>
<div class="a" style="left:633.6px;top:19.2px;width:9.8px;height:9.6px;border-radius:2.6px;background:#2e3244"></div>
<span class="t" style="left:74.20px;top:21.63px;font-size:5.4px;color:#e6e8ef;transform:scaleX(0.9831) rotate(0.03deg);-webkit-text-stroke:0.14px #e6e8ef;">Vaira</span>
<span class="t" style="left:102.70px;top:38.37px;font-size:6.3px;color:#f1f2f6;transform:scaleX(0.9833) rotate(0.03deg);-webkit-text-stroke:0.14px #f1f2f6;">office.vaira.app</span>
<span class="t" style="left:144.60px;top:38.37px;font-size:6.3px;color:#b9bdca;transform:scaleX(0.9875) rotate(0.03deg);-webkit-text-stroke:0.14px #b9bdca;">/o/c7be7mnm5f1rdro8tg2g/instances/cne9g8tv4evk9kldgung?view=steps&amp;task=ueberpruefung&amp;step=eins</span>
<svg width="670" height="417" viewBox="0 0 670 417">
<path d="M64.4 22.7 L65.9 22.1 L67.6 24.8 L70.9 20.6 L67.5 27.4 Z" fill="#e9a21f" stroke="#e9a21f" stroke-width="0.5" stroke-linejoin="round"/>
<path d="M58.500 32.500A2.500 2.500 0 0 0 61 30V32.500ZM158.500 32.500A2.500 2.500 0 0 1 156 30V32.500Z" fill="#292d3d"/>
<g stroke="#dfe1e8" stroke-width="0.8" stroke-linecap="round" fill="none">
<path d="M148.6 22.4l3.2 3.2M151.8 22.4l-3.2 3.2"/>
<path d="M165 22v4.2M162.9 24.1h4.2"/>
<path d="M636.9 23.3l1.6 1.6 1.6-1.6" stroke-width="0.9"/>
<path d="M30.2 41.7h5.2M32.4 39.4l-2.3 2.3 2.3 2.3" stroke="#d7dae3" stroke-width="0.8"/>
<path d="M44.2 41.7h5.2M47.2 39.4l2.3 2.3-2.3 2.3" stroke="#6f7487" stroke-width="0.8"/>
<path d="M64.3 40.1a2.6 2.6 0 1 0 0.6 2.6" stroke="#d7dae3" stroke-width="0.85"/>
<path d="M64.9 38.6v1.9h-1.9" stroke="#d7dae3" stroke-width="0.8"/>
<path d="M73.6 41.2l2.9-2.5 2.9 2.5v3.4h-1.9v-2.3h-2v2.3h-1.9z" stroke="#d7dae3" stroke-width="0.8" stroke-linejoin="round"/>
</g>
<circle cx="94.4" cy="41.7" r="4.6" fill="#2d3143"/>
<g fill="#e3e5ec"><rect x="91.9" y="39.7" width="1.8" height="1.5" rx=".4"/><rect x="94.5" y="40" width="2.5" height=".9"/><rect x="95.2" y="42.3" width="1.8" height="1.5" rx=".4"/><rect x="91.9" y="42.6" width="2.5" height=".9"/></g>
<path d="M520.6 38.6l.95 1.95 2.15.3-1.55 1.5.37 2.15-1.92-1.02-1.92 1.02.37-2.15-1.55-1.5 2.15-.3z" fill="none" stroke="#dfe1e8" stroke-width="0.75" stroke-linejoin="round"/>
<rect x="538" y="38.600" width="6.400" height="5.900" rx=".7" fill="#2c5fe3"/><path d="M540.800 39.500h2.800v3.200l-.9.9h-1.900z" fill="#f4f6fb"/><circle cx="543.800" cy="44.400" r="1.800" fill="#3a3f52"/><circle cx="543.800" cy="44.400" r="1" fill="#cfd4e2"/>
<rect x="552.8" y="38.2" width="6.8" height="6.8" rx=".8" fill="#ef7a22"/><path d="M554.3 39.6l3.8 4M558.1 39.6l-3.8 4M556.200 39v5.400" stroke="#ffc98a" stroke-width=".7"/>
<path d="M568.300 40.200H569.500A1 1 0 0 1 571.500 40.200H573.800V41.500A1 1 0 0 1 573.800 43.500V44.800H568.300Z" fill="none" stroke="#dfe1e8" stroke-width="0.8" stroke-linejoin="round"/>
<rect x="581.4" y="38.6" width=".6" height="6" fill="#454a5e"/>
<g stroke="#dfe1e8" stroke-width="0.85" fill="none" stroke-linecap="round" stroke-linejoin="round"><path d="M592.9 38.4v3.9M591.2 40.8l1.700 1.700 1.700-1.700M589.900 42.800v1.300a.6.600 0 0 0 .6.600h4.800a.6.600 0 0 0 .6-.6v-1.300"/></g>
<rect x="605" y="38.700" width="6" height="5.800" rx=".9" fill="none" stroke="#d6daea" stroke-width="0.75"/><rect x="608.600" y="39.100" width="2" height="5" fill="#a9c2ee"/>
<circle cx="623.1" cy="41.6" r="3.8" fill="#3a2a1c"/><ellipse cx="623.1" cy="41.2" rx="1.5" ry="2.2" fill="#c98a4a"/><path d="M621.2 44.6a2 2 0 0 1 3.8 0z" fill="#7a5a36"/>
<g fill="#dfe1e8"><circle cx="638.1" cy="39.3" r=".65"/><circle cx="638.1" cy="41.6" r=".65"/><circle cx="638.1" cy="43.9" r=".65"/></g>
</svg>
<div class="a" style="left:23px;top:15px;width:624px;height:1px;background:rgba(0,0,0,.5)"></div><div class="a" style="left:23px;top:386px;width:624px;height:1px;background:rgba(0,0,0,.75)"></div><div class="a" style="left:23px;top:15px;width:1px;height:372px;background:rgba(0,0,0,.3)"></div>
</div></div>
</body>
</html>
